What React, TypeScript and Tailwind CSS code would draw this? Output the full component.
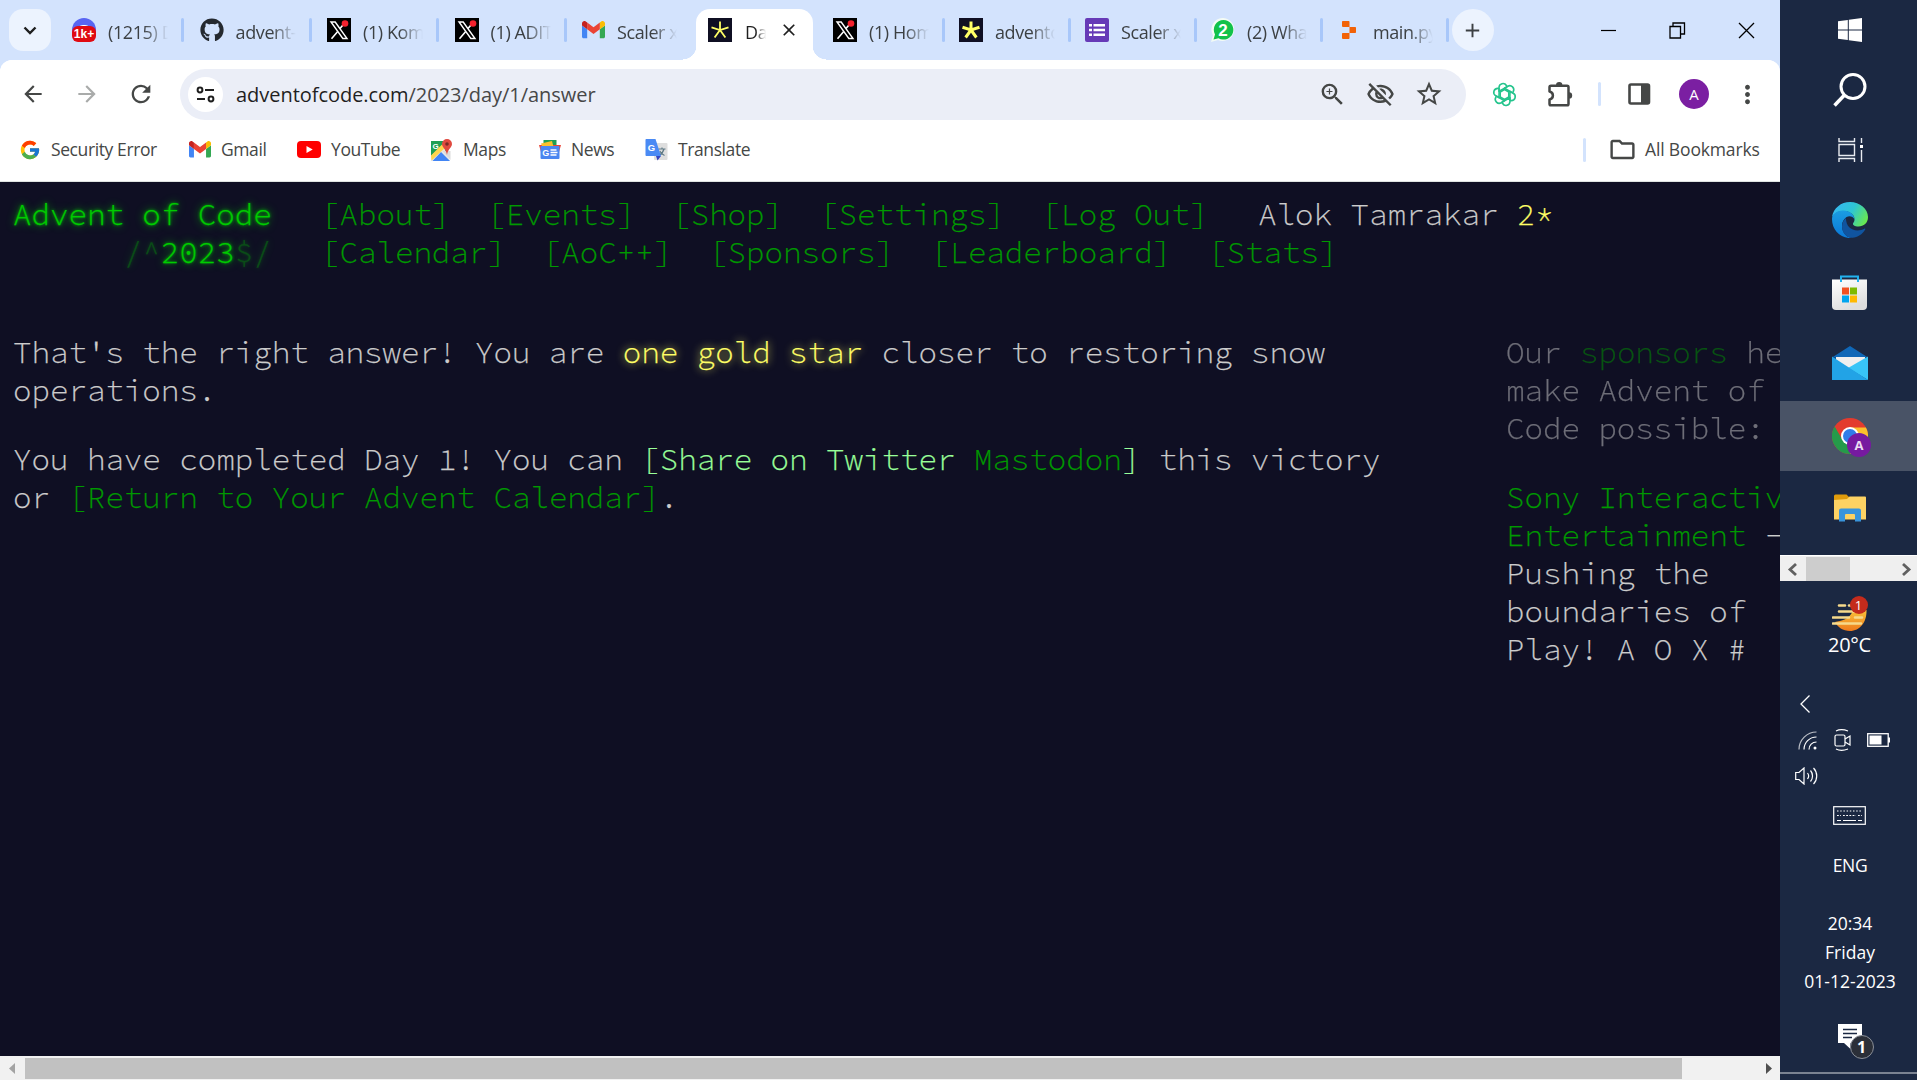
import type { ReactNode } from "react";
import {
  MdAdd,
  MdArrowBack,
  MdArrowForward,
  MdClose,
  MdMoreVert,
  MdOutlineFolder,
  MdOutlineVisibilityOff,
  MdRefresh,
  MdStarOutline,
  MdZoomIn,
} from "react-icons/md";
import { FcGoogle } from "react-icons/fc";
import { FaGithub } from "react-icons/fa6";

/* ---------- favicons ---------- */

function DiscordBadge() {
  return (
    <span className="relative block size-6 shrink-0">
      <span className="block size-6 rounded-full bg-[#5865f2]" />
      <span className="absolute left-[5px] top-[7px] h-[6px] w-[14px] rounded-t-full bg-white" />
      <span className="absolute bottom-0 left-0 flex h-[16px] w-6 items-center justify-center rounded-[6px] bg-[#e00a12] font-['Liberation_Sans'] text-[12px] font-bold leading-none text-white">
        1k+
      </span>
    </span>
  );
}

function XFavicon() {
  return (
    <svg width="24" height="24" viewBox="0 0 24 24" className="shrink-0">
      <rect width="24" height="24" fill="#000" />
      <path d="M4 4h4.200L20 20.500h-4.200z" fill="#000" stroke="#fff" strokeWidth="1.400" />
      <path d="M18.500 4 13 10.500M10.500 13.800 4.500 20.800" stroke="#fff" strokeWidth="1.600" />
      <circle cx="18" cy="5.500" r="3.300" fill="#f4212e" />
    </svg>
  );
}

function Gmail({ size = 23 }: { size?: number }) {
  return (
    <svg width={size} height={(size * 18) / 24} viewBox="0 0 24 18" className="shrink-0">
      <path fill="#4285f4" d="M1.6 18h3.8V8.7L0 4.6v11.8C0 17.3.7 18 1.6 18z" />
      <path fill="#34a853" d="M18.6 18h3.8c.9 0 1.6-.7 1.6-1.6V4.6l-5.4 4.1z" />
      <path fill="#fbbc04" d="M18.6 1.6v7.1L24 4.6V2.5c0-2-2.3-3.2-3.9-2z" />
      <path fill="#ea4335" d="M5.4 8.7V1.6l6.6 4.9 6.6-4.9v7.1L12 13.6z" />
      <path fill="#c5221f" d="M0 2.5v2.1l5.4 4.1V1.6L3.9.5C2.3-.7 0 .5 0 2.5z" />
    </svg>
  );
}

function AocStar({ bold }: { bold?: boolean }) {
  return (
    <svg width="24" height="24" viewBox="0 0 24 24" className="shrink-0">
      <rect width="24" height="24" fill="#0f0f23" />
      <path
        d="M12 3.500V12M3.500 9.300 12 12l8.500-2.700M12 12 6.600 19.500M12 12l5.400 7.500"
        stroke="#ffff66"
        strokeWidth={bold ? 3 : 1.8}
        fill="none"
      />
    </svg>
  );
}

function FormsIcon() {
  return (
    <svg width="24" height="24" viewBox="0 0 24 24" className="shrink-0">
      <rect width="24" height="24" rx="2" fill="#673ab7" />
      <path
        fill="#fff"
        d="M4 6h3v2.600H4zM8.500 6H20v2.600H8.500zM4 10.700h3v2.600H4zM8.500 10.700H20v2.600H8.500zM4 15.400h3V18H4zM8.500 15.400H20V18H8.500z"
      />
    </svg>
  );
}

function WhatsAppBadge() {
  return (
    <span className="relative flex size-6 shrink-0 items-center justify-center">
      <svg width="24" height="24" viewBox="0 0 24 24" className="absolute inset-0">
        <path d="M12.500 0A11.500 11.500 0 1 1 7 22L0 24l2-6.800A11.500 11.500 0 0 1 12.500 0z" fill="#f3fbf5" />
        <path d="M12.500 2A9.800 9.800 0 1 1 7.500 20.200L2.500 21.500l1.500-5A9.800 9.800 0 0 1 12.500 2z" fill="#12c24a" />
      </svg>
      <span className="relative font-['Liberation_Sans'] text-[17px] font-bold leading-none text-white">2</span>
    </span>
  );
}

function ReplitIcon() {
  return (
    <svg width="24" height="24" viewBox="0 0 24 24" className="shrink-0">
      <path
        fill="#f26207"
        d="M5 4c0-.6.400-1 1-1h5.500c.600 0 1 .400 1 1v5H6a1 1 0 0 1-1-1zM12.500 9H18c.600 0 1 .400 1 1v4c0 .600-.400 1-1 1h-5.500zM5 16c0-.600.400-1 1-1h6.500v5c0 .600-.400 1-1 1H6a1 1 0 0 1-1-1z"
      />
    </svg>
  );
}

/* ---------- bookmark icons ---------- */

function YouTube() {
  return (
    <svg width="24" height="17" viewBox="0 0 24 17" className="shrink-0">
      <rect width="24" height="17" rx="4" fill="#f00" />
      <path d="M9.500 5v7l6.200-3.500z" fill="#fff" />
    </svg>
  );
}

function Maps() {
  return (
    <svg width="23" height="22" viewBox="0 0 23 22" className="shrink-0">
      <path d="M1 2h16v20H1z" fill="#1e9e54" />
      <path d="M1 17 13 6l7 16H1z" fill="#e8e8e8" />
      <path d="M2.500 22 11 13l9 9z" fill="#4285f4" />
      <path d="M1 16.500 12.500 5l2.500 4L1.500 21.500z" fill="#ffd54f" />
      <path d="m12.500 12 8 9V12z" fill="#dcdcdc" />
      <text x="2.500" y="9.500" fontSize="8" fontWeight="700" fill="#fff" fontFamily="Liberation Sans">
        G
      </text>
      <path d="M17 0a5 5 0 0 1 5 5c0 3.500-4.200 5-5 11-.8-6-5-7.500-5-11a5 5 0 0 1 5-5z" fill="#e04a3f" />
      <circle cx="17" cy="5" r="1.800" fill="#7b2a24" />
    </svg>
  );
}

function News() {
  return (
    <svg width="22" height="19" viewBox="0 0 22 19" className="shrink-0">
      <path d="M4.500 0h13v6h-13z" fill="#1e9e54" />
      <path d="M0 5h22l-2 7H2z" fill="#ea4335" />
      <path d="M2 3.500 13 1l2 8H4z" fill="#fbc02d" />
      <rect x="1.500" y="6" width="19" height="13" rx="1" fill="#4a86f0" />
      <text x="3.300" y="15.600" fontSize="9" fontWeight="700" fill="#fff" fontFamily="Liberation Sans">
        G
      </text>
      <path d="M11.500 10h6M11.500 12.500h7M11.500 15h6" stroke="#fff" strokeWidth="1.300" />
    </svg>
  );
}

function Translate() {
  return (
    <svg width="23" height="23" viewBox="0 0 23 23" className="shrink-0">
      <rect x="9" y="5" width="13.500" height="17" rx="1" fill="#dedede" />
      <path d="M13.500 11h7M17 9.500V11m2 0c-.8 3-2.500 5-5 6.500m.8-4.500c1 2 2.500 3.500 4.700 4.500" stroke="#5f7a86" strokeWidth="1.200" fill="none" />
      <path d="m11 18 5 0-3.500 4.500z" fill="#3545c0" />
      <path d="M1.500 1h9L16 18H1.500C1 18 .5 17.600.5 17V2c0-.6.400-1 1-1z" fill="#4a8af4" />
      <text x="2.800" y="13" fontSize="9.500" fontWeight="700" fill="#fff" fontFamily="Liberation Sans">
        G
      </text>
    </svg>
  );
}

/* ---------- browser chrome ---------- */

type TabData = { icon: ReactNode; title: string; width: string };

const leftTabs: TabData[] = [
  { icon: <DiscordBadge />, title: "(1215) D", width: "w-[127.6px]" },
  { icon: <FaGithub size={24} color="#24292f" className="shrink-0" />, title: "advent-of", width: "w-[127.4px]" },
  { icon: <XFavicon />, title: "(1) Kompl", width: "w-[127.6px]" },
  { icon: <XFavicon />, title: "(1) ADITY", width: "w-[127.4px]" },
  { icon: <Gmail />, title: "Scaler x ", width: "w-[101px]" },
];

const rightTabs: TabData[] = [
  { icon: <XFavicon />, title: "(1) Home", width: "w-[126px]" },
  { icon: <AocStar bold />, title: "adventof", width: "w-[126px]" },
  { icon: <FormsIcon />, title: "Scaler x ", width: "w-[126px]" },
  { icon: <WhatsAppBadge />, title: "(2) What", width: "w-[126px]" },
  { icon: <ReplitIcon />, title: "main.py -", width: "w-[126px]" },
];

function Tab({ icon, title, width, divider = true }: TabData & { divider?: boolean }) {
  return (
    <div className={`flex h-6 shrink-0 items-center ${width}`}>
      {icon}
      <span className="ml-3 mt-[3px] w-[60px] shrink-0 overflow-hidden whitespace-nowrap text-[18px] leading-6 tracking-[-0.4px] text-[#3c4043] [mask-image:linear-gradient(to_right,black_60%,transparent)]">
        {title}
      </span>
      {divider && <span className="ml-[13px] h-6 w-[3px] shrink-0 rounded-full bg-[#a8c7fa]" />}
    </div>
  );
}

function TabStrip() {
  return (
    <div className="flex h-[60px] bg-[#d3e3fd]">
      <div className="ml-[9px] mt-[9px] flex h-[42px] w-[42px] shrink-0 items-center justify-center rounded-[14px] bg-[#ecf3fe]">
        <svg width="14" height="9" viewBox="0 0 14 9">
          <path d="m1.500 1.500 5.500 5.500 5.500-5.500" fill="none" stroke="#1f1f1f" strokeWidth="2.400" />
        </svg>
      </div>
      <div className="ml-[21px] flex shrink-0 pt-[18px]">
        {leftTabs.map((tab, i) => (
          <Tab key={i} {...tab} divider={i < leftTabs.length - 1} />
        ))}
      </div>
      {/* active tab with flared feet */}
      <div className="flex w-[143px] shrink-0 items-end">
        <div className="h-[14px] w-[13px] bg-[radial-gradient(circle_at_0_0,#d3e3fd_13px,white_13.5px)]" />
        <div className="flex h-[51px] w-[117px] items-center rounded-t-[14px] bg-white pb-[9px] pl-3">
          <AocStar />
          <span className="ml-[13px] mt-[3px] w-[21px] overflow-hidden whitespace-nowrap text-[18px] leading-6 tracking-[-0.4px] text-[#1f1f1f] [mask-image:linear-gradient(to_right,black_50%,transparent)]">
            Day 1
          </span>
          <MdClose size={20} color="#1f1f1f" className="ml-[13px] shrink-0" />
        </div>
        <div className="h-[14px] w-[13px] bg-[radial-gradient(circle_at_100%_0,#d3e3fd_13px,white_13.5px)]" />
      </div>
      <div className="ml-[7px] flex shrink-0 pt-[18px]">
        {rightTabs.map((tab, i) => (
          <Tab key={i} {...tab} />
        ))}
      </div>
      <div className="-ml-[11px] mt-[9px] flex size-[42px] shrink-0 items-center justify-center rounded-full bg-[#ecf3fe]">
        <MdAdd size={23} color="#3c4043" />
      </div>
      <div className="ml-auto flex h-[60px] shrink-0 items-center text-[#1f1f1f]">
        <svg width="15" height="15" viewBox="0 0 15 15">
          <path d="M0 7.500h15" stroke="#000" strokeWidth="1.200" />
        </svg>
        <svg width="17" height="17" viewBox="0 0 17 17" className="ml-[53px]">
          <path d="M1 4.500h10.500V16H1zM4 4.500V1h11.500v11h-4" fill="none" stroke="#000" strokeWidth="1.300" />
        </svg>
        <svg width="17" height="17" viewBox="0 0 17 17" className="ml-[52px] mr-[25px]">
          <path d="m1 1 15 15M16 1 1 16" stroke="#000" strokeWidth="1.300" />
        </svg>
      </div>
    </div>
  );
}

function SiteSettingsIcon() {
  return (
    <svg width="19" height="19" viewBox="0 0 19 19" fill="none" stroke="#1f1f1f" strokeWidth="2">
      <circle cx="4" cy="5" r="2.400" />
      <path d="M9 5h9M1 14h8" />
      <circle cx="15" cy="14" r="2.400" />
    </svg>
  );
}

function GptExtensionIcon() {
  return (
    <svg width="25" height="25" viewBox="-12.500 -12.500 25 25" fill="none" stroke="#25c48d" strokeWidth="1.600">
      {[0, 60, 120, 180, 240, 300].map((a) => (
        <path key={a} transform={`rotate(${a})`} d="M-5.500-3.200V-7a4 4 0 0 1 7.400-2l.6 1.300M-5.500-3.200 1.500-7" strokeLinecap="round" />
      ))}
      <path d="M0-5 4.300-2.500v5L0 5l-4.300-2.500v-5z" />
    </svg>
  );
}

function PuzzleIcon() {
  return (
    <svg width="26" height="26" viewBox="0 0 26 26">
      <path
        d="M2.500 6.300c0-1 .6-1.600 1.500-1.600h16c.9 0 1.500.6 1.500 1.600v16.400c0 1-.6 1.600-1.500 1.600H4c-.9 0-1.500-.6-1.500-1.600v-4.200c2.200-.4 3.400-2 3.400-4s-1.200-3.600-3.400-4z"
        fill="none"
        stroke="#454746"
        strokeWidth="2.500"
        strokeLinejoin="round"
      />
      <path d="M9 4.200a3.200 3.200 0 0 1 6.400 0zM22 11.200a3.200 3.200 0 0 1 0 6.400z" fill="#454746" />
    </svg>
  );
}

function SidePanelIcon() {
  return (
    <svg width="23" height="22" viewBox="0 0 23 22">
      <rect x="1.500" y="1.500" width="19.500" height="19" rx="1.500" fill="none" stroke="#454746" strokeWidth="2.600" />
      <path d="M13 1.500h8v19h-8z" fill="#454746" />
    </svg>
  );
}

function Toolbar() {
  return (
    <div className="flex h-[68px] items-center bg-white text-[#454746]">
      <MdArrowBack size={26} className="ml-[20px] shrink-0" />
      <MdArrowForward size={26} className="ml-[28px] shrink-0 text-[#a9abaa]" />
      <MdRefresh size={28} className="ml-[27px] shrink-0" />
      <div className="ml-[25px] flex h-[51px] w-[1286px] shrink-0 items-center rounded-full bg-[#ebeef7] pl-2">
        <span className="flex size-[35px] items-center justify-center rounded-full bg-white">
          <SiteSettingsIcon />
        </span>
        <span className="ml-[13px] mt-[2px] text-[20px] tracking-[-0.04px] text-[#1f1f1f]">
          adventofcode.com<span className="text-[#474747]">/2023/day/1/answer</span>
        </span>
        <MdZoomIn size={29} className="ml-auto" />
        <MdOutlineVisibilityOff size={29} className="ml-[19px]" />
        <MdStarOutline size={30} className="ml-[19px] mr-[22px]" />
      </div>
      <span className="ml-[26px] shrink-0">
        <GptExtensionIcon />
      </span>
      <span className="ml-[30px] shrink-0">
        <PuzzleIcon />
      </span>
      <span className="ml-[25px] h-6 w-[3px] shrink-0 rounded-full bg-[#d3e3fd]" />
      <span className="ml-[27px] shrink-0">
        <SidePanelIcon />
      </span>
      <span className="ml-[28px] flex size-[30px] shrink-0 items-center justify-center rounded-full bg-[#7b1fa2] text-[15px] text-white">
        A
      </span>
      <MdMoreVert size={29} className="ml-[24px] shrink-0" />
    </div>
  );
}

function Bookmark({ icon, label, space }: { icon: ReactNode; label: string; space: string }) {
  return (
    <div className={`flex shrink-0 items-center text-[17.5px] tracking-[-0.4px] text-[#454746] ${space}`}>
      {icon}
      <span className="ml-[10px] whitespace-nowrap">{label}</span>
    </div>
  );
}

function BookmarkBar() {
  return (
    <div className="flex h-[54px] items-center border-b border-[#dfe3e1] bg-white pb-[10px]">
      <Bookmark icon={<FcGoogle size={22} />} label="Security Error" space="w-[170px] ml-[19px]" />
      <Bookmark icon={<Gmail size={22} />} label="Gmail" space="w-[108px]" />
      <Bookmark icon={<YouTube />} label="YouTube" space="w-[133px]" />
      <Bookmark icon={<Maps />} label="Maps" space="w-[109px]" />
      <Bookmark icon={<News />} label="News" space="w-[106px]" />
      <Bookmark icon={<Translate />} label="Translate" space="w-[120px]" />
      <span className="ml-auto h-6 w-[3px] rounded-full bg-[#d3e3fd]" />
      <div className="ml-[22px] mr-[21px] flex items-center text-[17.5px] tracking-[-0.15px] text-[#454746]">
        <MdOutlineFolder size={29} />
        <span className="ml-[8px] w-[114px] whitespace-nowrap">All Bookmarks</span>
      </div>
    </div>
  );
}

/* ---------- page ---------- */

const navTop = ["[About]", "[Events]", "[Shop]", "[Settings]", "[Log Out]"];
const navBottom = ["[Calendar]", "[AoC++]", "[Sponsors]", "[Leaderboard]", "[Stats]"];

function AdventPage() {
  return (
    <main className="h-[874px] overflow-hidden bg-[#0f0f23] pl-[13px] pt-[13px] font-['Source_Code_Pro','Liberation_Mono',monospace] text-[30.8px] font-light leading-[38px] text-[#cccccc] [-webkit-text-stroke:0.25px_currentColor]">
      <header className="flex whitespace-pre">
        <h1 className="w-[308px] shrink-0 text-[#00cc00] [text-shadow:0_0_3px_#00cc00,0_0_8px_#00cc00]">
          <div>Advent of Code</div>
          <div>
            {"      "}
            <span className="opacity-[0.33]">/^</span>2023<span className="opacity-[0.33]">$/</span>
          </div>
        </h1>
        <nav className="text-[#009900]">
          <div className="flex gap-[37px]">
            {navTop.map((item) => (
              <a key={item}>{item}</a>
            ))}
            <span className="ml-[13px] text-[#cccccc]">
              Alok Tamrakar <span className="text-[#ffff66]">2*</span>
            </span>
          </div>
          <div className="flex gap-[37px]">
            {navBottom.map((item) => (
              <a key={item}>{item}</a>
            ))}
          </div>
        </nav>
      </header>
      <div className="mt-[62px] flex">
        <article className="w-[1493px] shrink-0">
          <p className="w-[1385px]">
            That's the right answer! You are{" "}
            <span className="text-[#ffff66] [text-shadow:0_0_8px_#ffff66]">one gold star</span> closer to restoring
            snow operations.
          </p>
          <p className="mt-[31px] w-[1385px]">
            You have completed Day 1! You can <span className="text-[#99ff99]">[Share on Twitter </span>
            <a className="text-[#009900]">Mastodon</a>
            <span className="text-[#99ff99]">]</span> this victory or{" "}
            <a className="text-[#009900]">[Return to Your Advent Calendar]</a>.
          </p>
        </article>
        <aside className="w-[330px] shrink-0">
          <div className="opacity-50">
            Our <a className="text-[#009900]">sponsors</a> help make Advent of Code possible:
          </div>
          <div className="mt-[31px]">
            <a className="text-[#009900]">Sony Interactive Entertainment</a> - Pushing the boundaries of Play! A O X #
          </div>
        </aside>
      </div>
    </main>
  );
}

function PageScrollbar() {
  return (
    <div className="flex h-6 items-center bg-[#f1f1f1]">
      <svg width="25" height="24" viewBox="0 0 25 24">
        <path d="M15 7v11l-6-5.500z" fill="#a3a3a3" />
      </svg>
      <div className="h-[21px] w-[1657px] bg-[#c1c1c1]" />
      <svg width="25" height="24" viewBox="0 0 25 24" className="ml-auto">
        <path d="M11 7v11l6-5.500z" fill="#505050" />
      </svg>
    </div>
  );
}

/* ---------- taskbar ---------- */

function WindowsLogo() {
  return (
    <svg width="24" height="24" viewBox="0 0 24 24" fill="#fff">
      <path d="M0 3.300 9.800 2v9.500H0zM10.800 1.800 24 0v11.500H10.800zM0 12.500h9.800V22L0 20.700zM10.800 12.500H24V24l-13.200-1.800z" />
    </svg>
  );
}

function SearchIcon() {
  return (
    <svg width="34" height="34" viewBox="0 0 34 34" fill="none" stroke="#fff">
      <circle cx="20" cy="13.500" r="12" strokeWidth="3" />
      <path d="m11.500 22-10 10.500" strokeWidth="3.500" />
    </svg>
  );
}

function TaskViewIcon() {
  return (
    <svg width="25" height="24" viewBox="0 0 25 24" fill="none" stroke="#e8ebf0" strokeWidth="1.400">
      <path d="M1 0v3.500h15.500V0M1 6.500h15.500v11H1zM1 24v-3.500h15.500V24M23.500 0v5M23.500 12v12" />
      <rect x="22" y="7" width="3" height="3" fill="#fff" stroke="none" />
    </svg>
  );
}

function EdgeIcon() {
  return (
    <svg width="36" height="36" viewBox="0 0 36 36">
      <defs>
        <linearGradient id="edgeTop" x1="0" x2="1" y1=".3" y2=".7">
          <stop offset="0" stopColor="#35b8f1" />
          <stop offset=".5" stopColor="#2ec5d3" />
          <stop offset="1" stopColor="#6bea4a" />
        </linearGradient>
        <linearGradient id="edgeLeft" x1="0" x2="0" y1="0" y2="1">
          <stop offset="0" stopColor="#1b9de2" />
          <stop offset="1" stopColor="#0a78d8" />
        </linearGradient>
      </defs>
      <path d="M0 15C1.500 6 9 0 18 0c10 0 18 7 18 15 0 6-4.500 9.500-9.500 9.500-4 0-6-1.500-5.500-3 .4-1 1.500-1.700 1.500-4C22.500 12 17 9 11.500 9 6 9 2 12 0 15z" fill="url(#edgeTop)" />
      <path d="M0 17c0-5 5-8.500 11-8.500 6.500 0 11.500 4 11.500 9-1-2-3-3.200-5-3.200-4 0-7.500 4.700-7.500 9.700C10 30 14 35.500 20 36 9 37 0 28.500 0 17z" fill="url(#edgeLeft)" />
      <path d="M14 16c-2.500 2-4 5-4 8.500C10 31 15 36 20.500 35.800c5-.3 10-3.500 12.700-8.300.4-.8-.3-1.100-.9-.7-1.800 1-4.300 1.600-6.800 1.600-6.500 0-11.700-4.400-11.500-12.400z" fill="#10549f" />
    </svg>
  );
}

function StoreIcon() {
  return (
    <svg width="36" height="36" viewBox="0 0 36 36">
      <defs>
        <linearGradient id="storeBag" x1="0" x2=".4" y1="0" y2="1">
          <stop offset="0" stopColor="#fff" />
          <stop offset="1" stopColor="#dedede" />
        </linearGradient>
      </defs>
      <path d="M0 4.500h35V31a4 4 0 0 1-4 4H4a4 4 0 0 1-4-4z" fill="url(#storeBag)" />
      <path d="M9 7V1.500h17V7" fill="none" stroke="#22b2ee" strokeWidth="2" />
      <path d="M10 12.500h7v7h-7z" fill="#f25022" />
      <path d="M18 12.500h7v7h-7z" fill="#7fba00" />
      <path d="M10 20.500h7v7h-7z" fill="#00a4ef" />
      <path d="M18 20.500h7v7h-7z" fill="#ffb900" />
    </svg>
  );
}

function MailIcon() {
  return (
    <svg width="36" height="34" viewBox="0 0 36 34">
      <path d="M18 0 36 11.500H0z" fill="#0f67b7" />
      <path d="M0 11h36v7H0z" fill="#0b4f94" />
      <path d="M4 11h29v12H4z" fill="#efefef" />
      <path d="M36 10.500V34L16 22z" fill="#38c5f7" />
      <path d="M0 10.500 36 34H0z" fill="#22a3e6" />
    </svg>
  );
}

function ChromeIcon() {
  return (
    <svg width="42" height="40" viewBox="0 0 42 40">
      <circle cx="18" cy="18" r="18" fill="#e33b2e" />
      <path d="M18 9.500h15.900A18 18 0 0 1 18 36l7.500-13.500z" fill="#fbc02d" />
      <path d="M2.700 8.500 10.500 22l7.500 4.500L18 36A18 18 0 0 1 2.700 8.500z" fill="#259a4a" />
      <path d="M10.500 22.300 18 26.500l7.400-3.500L18 36z" fill="#259a4a" />
      <circle cx="18" cy="18" r="9" fill="#fff" />
      <circle cx="18" cy="18" r="7" fill="#2f7de9" />
      <circle cx="27" cy="27" r="12" fill="#761aa0" />
      <text x="27" y="32" fontSize="13" fontWeight="700" textAnchor="middle" fill="#eadcf1" fontFamily="Open Sans">
        A
      </text>
    </svg>
  );
}

function ExplorerIcon() {
  return (
    <svg width="32" height="28" viewBox="0 0 32 28">
      <path d="M0 2a1.500 1.500 0 0 1 1.500-1.500h11L15 3v5H0z" fill="#e09b0b" />
      <path d="M0 6 13 5l2.500-2.500H31a1 1 0 0 1 1 1V25.500H0z" fill="#fdd263" />
      <path d="M5 27.500v-11a2 2 0 0 1 2-2h18a2 2 0 0 1 2 2v11h-6V21a1 1 0 0 0-1-1h-8a1 1 0 0 0-1 1v6.500z" fill="#3894dc" />
    </svg>
  );
}

function WeatherIcon() {
  return (
    <div className="relative h-[36px] w-[36px]">
      <svg width="36" height="36" viewBox="0 0 36 36">
        <defs>
          <linearGradient id="moon" x1="0" x2="0" y1="0" y2="1">
            <stop offset="0" stopColor="#f9c33a" />
            <stop offset="1" stopColor="#ee7a1c" />
          </linearGradient>
        </defs>
        <path d="M34.500 14C35 26 28 35 18 35c-7 0-12.500-4-15-9 6-1 15-2.500 18-12z" fill="url(#moon)" />
        <path d="M7 9.500h6M17 9.500h4M7 15.500h16M1 21.500h16M23 21.500h7M1 27.500h28" stroke="#f6d98b" strokeWidth="2.600" strokeLinecap="round" />
      </svg>
      <span className="absolute right-0 top-0 flex size-[18px] items-center justify-center rounded-full bg-[#c42b1c] text-[13px] leading-none text-white">
        1
      </span>
    </div>
  );
}

function TrayRow() {
  return (
    <div className="flex h-[22px] w-full items-center pl-[18px]">
      <svg width="19" height="19" viewBox="0 0 19 19" fill="none" stroke="#fff" strokeWidth="1.200">
        <path d="M1 18.500C1 9 9 1 18.500 1" opacity=".7" />
        <path d="M6 18.500C6 11.500 11.500 6 18.500 6M11 18.500c0-4.300 3.200-7.500 7.500-7.500" />
        <circle cx="17" cy="17" r="1.500" fill="#fff" stroke="none" />
      </svg>
      <svg width="17" height="22" viewBox="0 0 17 22" fill="none" stroke="#fff" strokeWidth="1.200" className="ml-[17px]">
        <rect x="1" y="6" width="10" height="11" rx="1.500" />
        <path d="m11 10 5-3v9l-5-3M2 2c3-1.500 8-1.500 12 0M2 20c3 1.500 8 1.500 12 0" />
      </svg>
      <svg width="23" height="14" viewBox="0 0 23 14" className="ml-[16px]">
        <rect x=".7" y=".7" width="20.500" height="12.600" fill="none" stroke="#fff" strokeWidth="1.300" />
        <path d="M2.500 2.500h12v9h-12zM21 4.500h2v5h-2z" fill="#fff" />
      </svg>
    </div>
  );
}

function SpeakerIcon() {
  return (
    <svg width="23" height="18" viewBox="0 0 23 18" fill="none" stroke="#fff" strokeWidth="1.200">
      <path d="M.7 5.500H4L9 1v16l-5-4.500H.700zM12.500 6c1.300 1.700 1.300 4.300 0 6M15.500 3.500c2.700 3.200 2.700 7.800 0 11M18.500 1c4.300 4.500 4.300 11.500 0 16" />
    </svg>
  );
}

function KeyboardIcon() {
  return (
    <svg width="33" height="19" viewBox="0 0 33 19" fill="none" stroke="#fff" strokeWidth="1.200">
      <rect x=".7" y=".7" width="31.600" height="17.600" />
      <path d="M4 5h25" strokeDasharray="1.500 1.700" />
      <path d="M4 9.500h4M10 9.500h13M25 9.500h4" strokeDasharray="1.800 1.400" />
      <path d="M4 14.500h4M10 14.500h13M25 14.500h4" />
    </svg>
  );
}

function NotificationIcon() {
  return (
    <div className="relative ml-[26px] h-[36px] w-[48px]">
      <svg width="24" height="25" viewBox="0 0 24 25">
        <path d="M0 0h24v19H12.500v6l-6.500-6H0z" fill="#fff" />
        <path d="M5 5.500h14M5 9.500h14M5 13.500h9" stroke="#1b2842" strokeWidth="1.300" />
      </svg>
      <span className="absolute left-[12px] top-[11px] flex size-[24px] items-center justify-center rounded-full border border-[#8a8f98] bg-[#2b2f38] text-[16px] font-bold leading-none text-white">
        1
      </span>
    </div>
  );
}

function Taskbar() {
  return (
    <aside className="flex h-[1080px] w-[137px] shrink-0 flex-col items-center bg-[#1b2842] text-[17.5px] text-white">
      <div className="flex h-[60px] w-full items-center justify-center pl-[3px]">
        <WindowsLogo />
      </div>
      <div className="flex h-[60px] w-full items-center justify-center pl-[2px]">
        <SearchIcon />
      </div>
      <div className="flex h-[60px] w-full items-center justify-center pl-[3px]">
        <TaskViewIcon />
      </div>
      <div className="flex h-[80px] w-full items-center justify-center pl-[3px]">
        <EdgeIcon />
      </div>
      <div className="flex h-[65px] w-full items-center justify-center pl-[3px]">
        <StoreIcon />
      </div>
      <div className="flex h-[76px] w-full items-center justify-center pl-[3px]">
        <MailIcon />
      </div>
      <div className="flex h-[70px] w-full items-center justify-center bg-[#495366] pl-[9px] pt-[4px]">
        <ChromeIcon />
      </div>
      <div className="flex h-[84px] w-full items-center justify-center pb-[10px] pl-[3px]">
        <ExplorerIcon />
      </div>
      <div className="flex h-[26px] w-full items-center border-t border-white bg-[#efefef]">
        <svg width="26" height="26" viewBox="0 0 26 26">
          <path d="m16 8-6 5.500 6 5.500" fill="none" stroke="#606060" strokeWidth="2.800" />
        </svg>
        <div className="h-6 w-[44px] bg-[#cdcdcd]" />
        <svg width="26" height="26" viewBox="0 0 26 26" className="ml-auto mr-[-2px]">
          <path d="m10 8 6 5.500-6 5.500" fill="none" stroke="#606060" strokeWidth="2.800" />
        </svg>
      </div>
      <div className="mt-[15px] pl-[2px]">
        <WeatherIcon />
      </div>
      <div className="mt-[1px] h-[24px] pl-[2px] text-[20px] leading-[24px] tracking-[-0.3px]">20°C</div>
      <div className="mt-[38px] h-[18px] w-full pl-[20px]">
        <svg width="11" height="18" viewBox="0 0 11 18">
          <path d="M9.500.500 1 9l8.500 8.500" fill="none" stroke="#fff" strokeWidth="1.300" />
        </svg>
      </div>
      <div className="mt-[16px] w-full">
        <TrayRow />
      </div>
      <div className="mt-[16px] h-[18px] w-full pl-[15px]">
        <SpeakerIcon />
      </div>
      <div className="mt-[21px] h-[19px] pl-[2px]">
        <KeyboardIcon />
      </div>
      <div className="mt-[29px] h-[23px] pl-[3px] leading-[23px] tracking-[-0.4px]">ENG</div>
      <div className="mt-[32px] pl-[3px] text-center leading-[29px] tracking-[0.02px]">
        <div>20:34</div>
        <div>Friday</div>
        <div>01-12-2023</div>
      </div>
      <div className="mt-[28px]">
        <NotificationIcon />
      </div>
      <div className="mb-[6px] mt-auto h-[2px] w-full bg-[#7a8291]" />
    </aside>
  );
}

export default function App() {
  return (
    <div className="flex h-[1080px] w-[1917px] overflow-hidden font-['Open_Sans',sans-serif]">
      <div className="flex w-[1780px] shrink-0 flex-col overflow-hidden bg-white">
        <TabStrip />
        <div className="bg-[#d3e3fd]">
          <div className="overflow-hidden rounded-t-[12px] bg-white">
            <Toolbar />
            <BookmarkBar />
          </div>
        </div>
        <AdventPage />
        <PageScrollbar />
      </div>
      <Taskbar />
    </div>
  );
}
